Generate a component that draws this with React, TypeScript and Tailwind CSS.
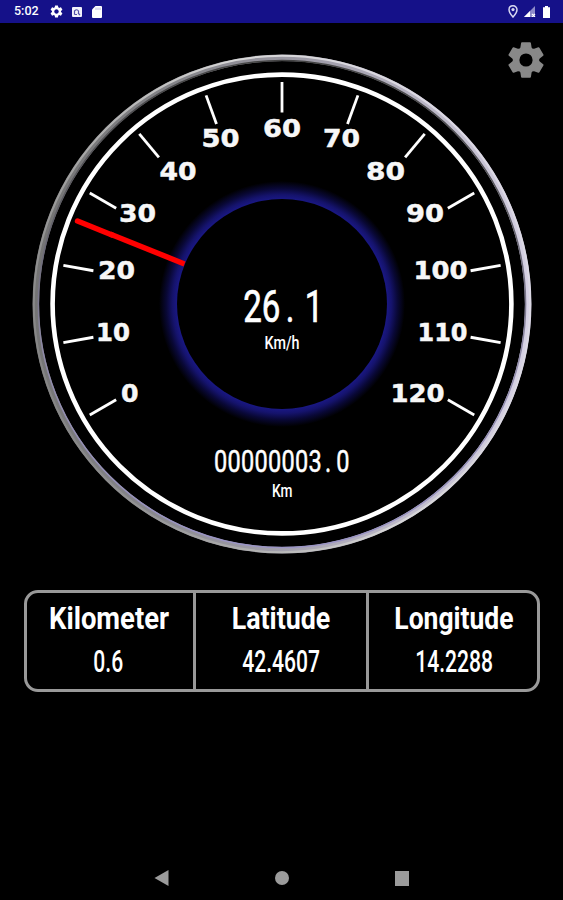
import { MdSettings } from 'react-icons/md';

const CX = 282;
const CY = 281;

// left edge, width and baseline of each number on the dial
const labels = [
  { text: '0', x: 121, w: 17.5, y: 378.7 },
  { text: '10', x: 96, w: 34, y: 318 },
  { text: '20', x: 98, w: 37, y: 256.4 },
  { text: '30', x: 119, w: 37, y: 198.7 },
  { text: '40', x: 159.5, w: 37, y: 157.4 },
  { text: '50', x: 201.5, w: 38, y: 124 },
  { text: '60', x: 263, w: 38, y: 114.3 },
  { text: '70', x: 323, w: 37, y: 124 },
  { text: '80', x: 366, w: 39, y: 157.4 },
  { text: '90', x: 406, w: 38, y: 198.7 },
  { text: '100', x: 413.5, w: 54, y: 256.4 },
  { text: '110', x: 417.5, w: 50, y: 318 },
  { text: '120', x: 390.5, w: 54, y: 378.7 },
];

const cells = [
  { title: 'Kilometer', value: '0.6', titleScale: 'scale-x-[0.87]', width: 'w-[169px] pr-[3px]' },
  { title: 'Latitude', value: '42.4607', titleScale: 'scale-x-[0.85]', width: 'w-[173px]' },
  { title: 'Longitude', value: '14.2288', titleScale: 'scale-x-[0.84]', width: 'flex-1 pl-0.5' },
];

function StatusBar() {
  return (
    <div className="flex h-[23px] items-center justify-between bg-[#151189] pr-[13px] pl-3.5 text-white">
      <div className="flex items-center">
        <span className="w-[35px] text-[12.5px] leading-none font-medium">5:02</span>
        <MdSettings className="h-[15px] w-[15px]" />
        <svg width="10" height="10" viewBox="0 0 10 10" className="ml-2">
          <rect width="10" height="10" rx="1" fill="#f2f2fa" />
          <path d="M2.5 7.5V4Q5 1.5 6.5 4V6M2.5 7.5H5M6 6 8 8" stroke="#5350a8" strokeWidth="1.2" fill="none" />
        </svg>
        <svg width="10" height="12" viewBox="0 0 10 12" className="ml-2.5">
          <path d="M3.5 0H9Q10 0 10 1V11Q10 12 9 12H1Q0 12 0 11V3.5Z" fill="white" />
          <path d="M4 1.5V4M6 1.5V4M8 1.5V4" stroke="#aaa8d8" strokeWidth=".8" />
        </svg>
      </div>
      <div className="flex items-center">
        <svg width="10" height="13" viewBox="0 0 10 13">
          <path d="M5 .8C2.6.8 1 2.5 1 4.7 1 7.5 5 12 5 12S9 7.5 9 4.7C9 2.5 7.4.8 5 .8Z" fill="none" stroke="#d9d9f2" strokeWidth="1.5" />
          <circle cx="5" cy="4.6" r="1.6" fill="#d9d9f2" />
        </svg>
        <svg width="12" height="11" viewBox="0 0 12 11" className="ml-1.5">
          <path d="M11 0V11H0Z" fill="#8e8bc9" />
          <path d="M6 5V11H0Z" fill="white" />
          <path d="M8 8 11 11M11 8 8 11" stroke="white" strokeWidth="1.2" />
        </svg>
        <svg width="7" height="12" viewBox="0 0 7 12" className="ml-[7px]">
          <path d="M2 0H5V1.2H7V12H0V1.2H2Z" fill="white" />
        </svg>
      </div>
    </div>
  );
}

function GearIcon() {
  return (
    <svg width="36" height="36" viewBox="-18 -18 36 36" fill="#888888">
      {[0, 60, 120, 180, 240, 300].map((angle) => (
        <path
          key={angle}
          d="M-4 -17.8H4Q4.8 -17.8 4.9 -17L5.6 -12.6L8 -9H-8L-5.6 -12.6L-4.9 -17Q-4.8 -17.8 -4 -17.8Z"
          transform={`rotate(${angle})`}
        />
      ))}
      <circle r="12.4" />
      <circle r="6.6" fill="black" />
    </svg>
  );
}

function Gauge() {
  return (
    <svg width="563" height="567" viewBox="0 0 563 567" className="block">
      <defs>
        <linearGradient id="rim" x1="0" y1="0.45" x2="1" y2="0.55">
          <stop offset="0" stopColor="#747474" />
          <stop offset="0.25" stopColor="#85858a" />
          <stop offset="0.55" stopColor="#a3a0ad" />
          <stop offset="1" stopColor="#d6d1e4" />
        </linearGradient>
        <linearGradient id="rimShine" x1="0" y1="0.6" x2="0.9" y2="0.3">
          <stop offset="0" stopColor="#858585" />
          <stop offset="0.3" stopColor="#b0b0b0" />
          <stop offset="0.6" stopColor="#d6d6d6" />
          <stop offset="1" stopColor="#dcd9e4" />
        </linearGradient>
        <linearGradient id="rimShade" x1="0" y1="0" x2="0" y2="1">
          <stop offset="0" stopColor="#444444" />
          <stop offset="0.3" stopColor="#5c5b62" />
          <stop offset="0.6" stopColor="#8f8aa8" />
          <stop offset="1" stopColor="#9a94c4" />
        </linearGradient>
        <radialGradient id="glow" gradientUnits="userSpaceOnUse" cx={CX} cy={CY} r="123">
          <stop offset="0.85" stopColor="#1a1886" />
          <stop offset="0.89" stopColor="#15136c" />
          <stop offset="0.94" stopColor="#090836" />
          <stop offset="1" stopColor="#000000" />
        </radialGradient>
      </defs>

      <circle cx={CX} cy={CY} r="246.2" fill="none" stroke="url(#rim)" strokeWidth="6.5" />
      <circle cx={CX} cy={CY} r="248.2" fill="none" stroke="url(#rimShine)" strokeWidth="2" />
      <circle cx={CX} cy={CY} r="243.6" fill="none" stroke="url(#rimShade)" strokeWidth="1.5" />
      <circle cx={CX} cy={CY} r="229.4" fill="none" stroke="white" strokeWidth="4.6" />

      <circle cx={CX} cy={CY} r="123" fill="url(#glow)" />
      <circle cx={CX} cy={CY} r="105" fill="black" />

      {labels.map((label, i) => (
        <line
          key={label.text}
          x1={CX}
          y1={CY - 222}
          x2={CX}
          y2={CY - 191.5}
          stroke="white"
          strokeWidth="2.8"
          transform={`rotate(${-120 + i * 20} ${CX} ${CY})`}
        />
      ))}

      <g fill="#f7f7f7" stroke="#f7f7f7" strokeWidth="0.5" fontFamily="'DejaVu Sans', sans-serif" fontWeight="bold" fontSize="25">
        {labels.map((label) => (
          <text key={label.text} x={label.x} y={label.y} textLength={label.w} lengthAdjust="spacingAndGlyphs">
            {label.text}
          </text>
        ))}
      </g>

      <line x1="184.5" y1="240.9" x2="110" y2="211.1" stroke="#ff0000" strokeWidth="5.4" />
      <line x1="112" y1="211.9" x2="77.5" y2="198" stroke="#ff0000" strokeWidth="5.4" strokeLinecap="round" />

      <g fill="white" fontFamily="Roboto, sans-serif">
        <text
          transform="translate(0 298.7) scale(0.76 1)"
          x="320 344.5 376 401"
          y="0"
          fontSize="43.5"
          stroke="white"
          strokeWidth="0.7"
        >
          26.1
        </text>
        <text x="264.5" y="325.7" fontSize="18" fontWeight="500" textLength="35" lengthAdjust="spacingAndGlyphs">
          Km/h
        </text>
        <text
          transform="translate(0 448.5) scale(0.76 1)"
          x="281.5 299.3 317 334.8 352.6 370.3 388.1 405.8 427.5 442.5"
          y="0"
          fontSize="31"
          stroke="white"
          strokeWidth="0.5"
        >
          00000003.0
        </text>
        <text x="272" y="474.3" fontSize="18" fontWeight="500" textLength="20.5" lengthAdjust="spacingAndGlyphs">
          Km
        </text>
      </g>
    </svg>
  );
}

function NavBar() {
  return (
    <div className="mt-auto flex h-11 items-center justify-between pr-[154px] pl-[154px] text-[#9b9b9b]">
      <svg width="15" height="16" viewBox="0 0 15 16" fill="currentColor">
        <path d="M14.5 0V16L0.5 8Z" />
      </svg>
      <div className="h-3.5 w-3.5 rounded-full bg-[#9b9b9b]"></div>
      <div className="h-[15px] w-3.5 bg-[#9b9b9b]"></div>
    </div>
  );
}

export default function App() {
  return (
    <div className="flex h-[900px] w-[563px] flex-col overflow-hidden bg-black font-['Roboto',sans-serif] text-white">
      <StatusBar />
      <div className="relative">
        <Gauge />
        <button className="absolute top-[19px] right-[19px]">
          <GearIcon />
        </button>
      </div>

      <div className="mr-[23px] ml-6 flex h-[102px] divide-x-[3.5px] divide-[#999999] rounded-[14px] border-[3.5px] border-[#999999]">
        {cells.map((cell) => (
          <div key={cell.title} className={`flex flex-col items-center pt-[5px] whitespace-nowrap ${cell.width}`}>
            <div className={`text-[31.5px] leading-[42px] font-bold ${cell.titleScale}`}>{cell.title}</div>
            <div className="scale-x-[0.67] text-[31.5px] leading-[43px] font-medium">{cell.value}</div>
          </div>
        ))}
      </div>

      <NavBar />
    </div>
  );
}
